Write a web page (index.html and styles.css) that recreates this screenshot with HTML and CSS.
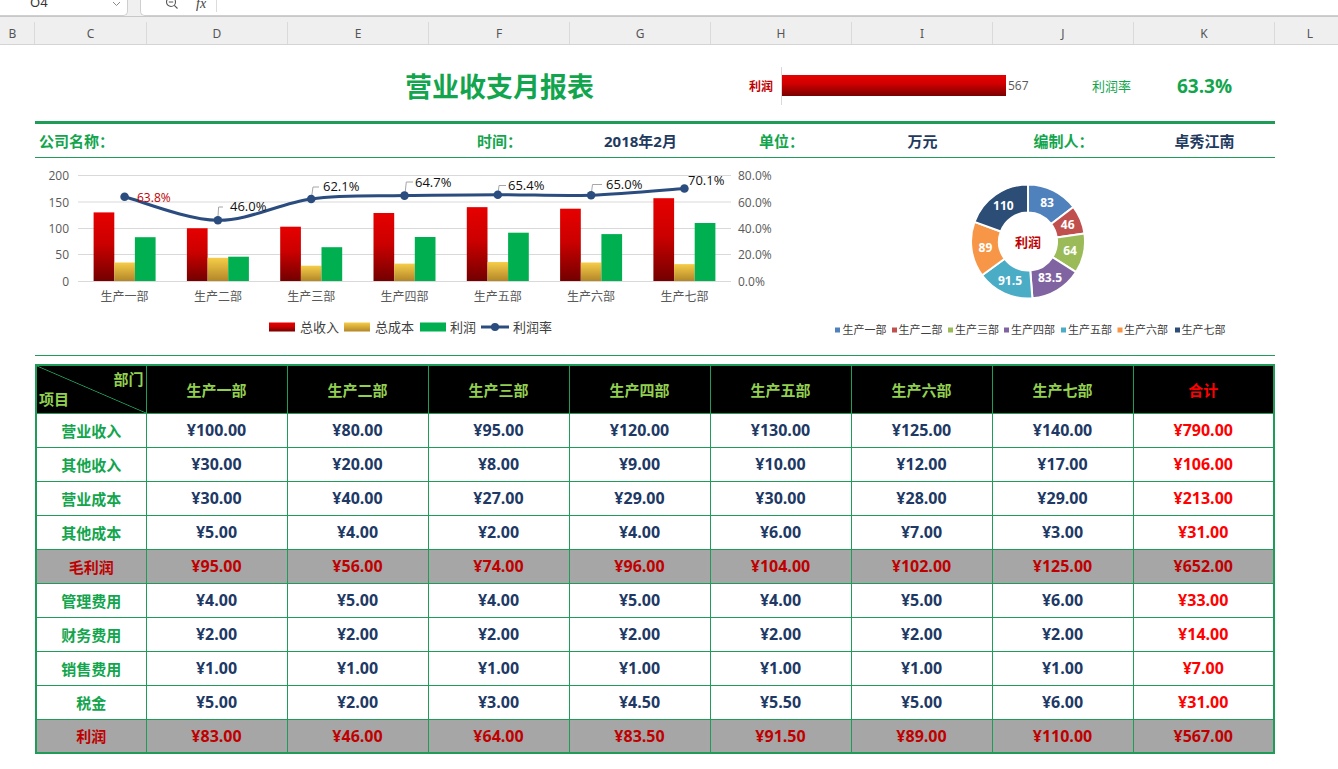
FILE: index.html
```html
<!DOCTYPE html>
<html lang="zh-CN">
<head>
<meta charset="utf-8">
<title>营业收支月报表</title>
<link rel="stylesheet" href="styles.css">
</head>
<body>
<div class="fbar">
  <div class="namebox"><span class="nb-text">O4</span>
    <svg class="chev" width="9" height="6" viewBox="0 0 9 6"><path d="M1 1 L4.5 4.5 L8 1" fill="none" stroke="#8a8a8a" stroke-width="1"/></svg>
  </div>
  <div class="fbox">
    <svg class="zoom" width="14" height="12" viewBox="0 0 14 12"><circle cx="6" cy="2" r="4.5" fill="none" stroke="#555" stroke-width="1.1"/><path d="M3.8 2 H8.2 M9.3 5.3 L12.5 8.5" stroke="#555" stroke-width="1.1" fill="none"/></svg>
    <span class="fx">fx</span>
    <span class="fsep"></span>
  </div>
</div>
<div class="colhdr">
  <div class="ch-b">B</div><div>C</div><div>D</div><div>E</div><div>F</div><div>G</div><div>H</div><div>I</div><div>J</div><div>K</div><div class="ch-l">L</div>
</div>
<div class="sheet">
  <div class="report">
    <div class="title-row">
      <div></div>
      <div class="title">营业收支月报表</div>
      <div class="dbar">
        <span class="dbar-label">利润</span>
        <div class="dbar-plot"><div class="dbar-fill"></div><span class="dbar-val">567</span></div>
      </div>
      <div class="rate-label">利润率</div>
      <div class="rate-val">63.3%</div>
    </div>
    <div class="rule-thick"></div>
    <div class="info-row">
      <div class="info-lbl info-first">公司名称：</div>
      <div></div><div></div>
      <div class="info-lbl">时间：</div>
      <div class="info-val">2018年2月</div>
      <div class="info-lbl">单位：</div>
      <div class="info-val">万元</div>
      <div class="info-lbl">编制人：</div>
      <div class="info-val">卓秀江南</div>
    </div>
    <div class="rule-thin"></div>
    <div class="charts">
      <svg class="combo" width="745" height="197" viewBox="35 158 745 197">
        <defs>
          <linearGradient id="gRed" x1="0" y1="0" x2="0" y2="1"><stop offset="0" stop-color="#e60000"/><stop offset="0.45" stop-color="#cc0000"/><stop offset="1" stop-color="#730000"/></linearGradient>
          <linearGradient id="gYel" x1="0" y1="0" x2="0" y2="1"><stop offset="0" stop-color="#f6cd48"/><stop offset="1" stop-color="#b38628"/></linearGradient>
        </defs>
        <g class="grid-lines">
          <line x1="78" y1="175.5" x2="731" y2="175.5"/>
          <line x1="78" y1="202" x2="731" y2="202"/>
          <line x1="78" y1="228.5" x2="731" y2="228.5"/>
          <line x1="78" y1="254.5" x2="731" y2="254.5"/>
          <line x1="78" y1="281.5" x2="731" y2="281.5"/>
        </g>
        <g class="ax ax-l">
          <text x="69" y="180">200</text><text x="69" y="206.5">150</text><text x="69" y="233">100</text><text x="69" y="259">50</text><text x="69" y="286">0</text>
        </g>
        <g class="ax">
          <text x="738" y="180">80.0%</text><text x="738" y="206.5">60.0%</text><text x="738" y="233">40.0%</text><text x="738" y="259">20.0%</text><text x="738" y="286">0.0%</text>
        </g>
        <g fill="url(#gRed)">
          <rect x="93.6" y="212.4" width="20.7" height="68.6"/>
          <rect x="186.9" y="228.25" width="20.7" height="52.75"/>
          <rect x="280.2" y="226.7" width="20.7" height="54.3"/>
          <rect x="373.5" y="213" width="20.7" height="68"/>
          <rect x="466.8" y="207.15" width="20.7" height="73.85"/>
          <rect x="560.1" y="208.7" width="20.7" height="72.3"/>
          <rect x="653.4" y="198.2" width="20.7" height="82.8"/>
        </g>
        <g fill="url(#gYel)">
          <rect x="114.3" y="262.5" width="20.6" height="18.5"/>
          <rect x="207.6" y="257.8" width="20.6" height="23.2"/>
          <rect x="300.9" y="265.7" width="20.6" height="15.3"/>
          <rect x="394.2" y="263.6" width="20.6" height="17.4"/>
          <rect x="487.5" y="262" width="20.6" height="19"/>
          <rect x="580.8" y="262.5" width="20.6" height="18.5"/>
          <rect x="674.1" y="264.1" width="20.6" height="16.9"/>
        </g>
        <g fill="#00b050">
          <rect x="134.9" y="237.2" width="20.7" height="43.8"/>
          <rect x="228.2" y="256.7" width="20.7" height="24.3"/>
          <rect x="321.5" y="247.2" width="20.7" height="33.8"/>
          <rect x="414.8" y="237" width="20.7" height="44"/>
          <rect x="508.1" y="232.7" width="20.7" height="48.3"/>
          <rect x="601.4" y="234.1" width="20.7" height="46.9"/>
          <rect x="694.7" y="223" width="20.7" height="58"/>
        </g>
        <path class="rate-line" d="M124.6,196.8 C140.15,200.7 186.8,219.9 217.9,220.3 C249,220.7 280.1,203.1 311.2,199 C342.3,194.9 373.4,196.3 404.5,195.6 C435.6,194.9 466.7,194.8 497.8,194.7 C528.9,194.6 560,196.2 591.1,195.2 C622.2,194.2 668.85,189.6 684.4,188.5"/>
        <g class="leaders">
          <polyline points="218,216.5 218.6,207 223,207"/>
          <polyline points="311.8,195.5 313,187 319,187"/>
          <polyline points="405.2,192 406.3,182 413,182"/>
          <polyline points="498.3,191.5 499,185.5 506,185.5"/>
          <polyline points="591.6,191.5 592.5,184.5 602,184.5"/>
        </g>
        <g fill="#2b4c7e">
          <circle cx="124.6" cy="196.8" r="4.3"/><circle cx="217.9" cy="220.3" r="4.3"/><circle cx="311.2" cy="199" r="4.3"/><circle cx="404.5" cy="195.6" r="4.3"/><circle cx="497.8" cy="194.7" r="4.3"/><circle cx="591.1" cy="195.2" r="4.3"/><circle cx="684.4" cy="188.5" r="4.3"/>
        </g>
        <text class="dl dl-red" x="137" y="201.5">63.8%</text>
        <text class="dl" x="230" y="210.5">46.0%</text>
        <text class="dl" x="323" y="190.5">62.1%</text>
        <text class="dl" x="415" y="186.5">64.7%</text>
        <text class="dl" x="508" y="189.5">65.4%</text>
        <text class="dl" x="606" y="188.5">65.0%</text>
        <text class="dl" x="688" y="185">70.1%</text>
        <g class="cat">
          <text x="124.6" y="300.5">生产一部</text><text x="217.9" y="300.5">生产二部</text><text x="311.2" y="300.5">生产三部</text><text x="404.5" y="300.5">生产四部</text><text x="497.8" y="300.5">生产五部</text><text x="591.1" y="300.5">生产六部</text><text x="684.4" y="300.5">生产七部</text>
        </g>
        <g class="lg">
          <rect x="269" y="322.5" width="26" height="9" fill="url(#gRed)"/><text x="300" y="331.5">总收入</text>
          <rect x="344" y="322.5" width="26" height="9" fill="url(#gYel)"/><text x="375" y="331.5">总成本</text>
          <rect x="420" y="322.5" width="26" height="9" fill="#00b050"/><text x="450" y="331.5">利润</text>
          <line x1="481" y1="327" x2="509" y2="327" stroke="#2b4c7e" stroke-width="3"/><circle cx="495" cy="327" r="4" fill="#2b4c7e"/><text x="513" y="331.5">利润率</text>
        </g>
      </svg>
      <svg class="donut" width="495" height="197" viewBox="780 158 495 197">
        <g stroke="#fff" stroke-width="2" stroke-linejoin="round">
          <path fill="#4f81bd" d="M1028,184.5 A57,57 0 0 1 1073.34,206.96 L1051.07,223.93 A29,29 0 0 0 1028,212.5 Z"/>
          <path fill="#c0504d" d="M1073.34,206.96 A57,57 0 0 1 1084.43,233.47 L1056.71,237.41 A29,29 0 0 0 1051.07,223.93 Z"/>
          <path fill="#9bbb59" d="M1084.43,233.47 A57,57 0 0 1 1076.05,272.16 L1052.45,257.1 A29,29 0 0 0 1056.71,237.41 Z"/>
          <path fill="#8064a2" d="M1076.05,272.16 A57,57 0 0 1 1032.41,298.33 L1030.24,270.41 A29,29 0 0 0 1052.45,257.1 Z"/>
          <path fill="#4bacc6" d="M1032.41,298.33 A57,57 0 0 1 982.1,275.29 L1004.65,258.69 A29,29 0 0 0 1030.24,270.41 Z"/>
          <path fill="#f79646" d="M982.1,275.29 A57,57 0 0 1 974.49,221.86 L1000.78,231.51 A29,29 0 0 0 1004.65,258.69 Z"/>
          <path fill="#2c4d75" d="M974.49,221.86 A57,57 0 0 1 1028,184.5 L1028,212.5 A29,29 0 0 0 1000.78,231.51 Z"/>
        </g>
        <g class="dn">
          <text x="1047" y="207">83</text>
          <text x="1067.7" y="229">46</text>
          <text x="1070" y="254.6">64</text>
          <text x="1050" y="282.4">83.5</text>
          <text x="1010" y="284.6">91.5</text>
          <text x="985.4" y="251.5">89</text>
          <text x="1003.4" y="210.2">110</text>
        </g>
        <text class="dn-center" x="1028" y="246.5">利润</text>
        <g class="dlg">
          <rect x="835" y="327.5" width="5" height="5" fill="#4f81bd"/><text x="842.5" y="334">生产一部</text>
          <rect x="892" y="327.5" width="5" height="5" fill="#c0504d"/><text x="898.5" y="334">生产二部</text>
          <rect x="948" y="327.5" width="5" height="5" fill="#9bbb59"/><text x="955" y="334">生产三部</text>
          <rect x="1004" y="327.5" width="5" height="5" fill="#8064a2"/><text x="1011" y="334">生产四部</text>
          <rect x="1061" y="327.5" width="5" height="5" fill="#4bacc6"/><text x="1068" y="334">生产五部</text>
          <rect x="1117.5" y="327.5" width="5" height="5" fill="#f79646"/><text x="1124" y="334">生产六部</text>
          <rect x="1175" y="327.5" width="5" height="5" fill="#2c4d75"/><text x="1181.5" y="334">生产七部</text>
        </g>
      </svg>
    </div>
    <div class="rule-thin"></div>
    <table class="tbl">
      <colgroup><col class="c-first"><col><col><col><col><col><col><col><col></colgroup>
      <thead>
        <tr>
          <th class="diag"><div class="dg-top">部门</div><div class="dg-bot">项目</div></th>
          <th>生产一部</th><th>生产二部</th><th>生产三部</th><th>生产四部</th><th>生产五部</th><th>生产六部</th><th>生产七部</th><th class="total">合计</th>
        </tr>
      </thead>
      <tbody>
        <tr><td class="lbl">营业收入</td><td>¥100.00</td><td>¥80.00</td><td>¥95.00</td><td>¥120.00</td><td>¥130.00</td><td>¥125.00</td><td>¥140.00</td><td class="sum">¥790.00</td></tr>
        <tr><td class="lbl">其他收入</td><td>¥30.00</td><td>¥20.00</td><td>¥8.00</td><td>¥9.00</td><td>¥10.00</td><td>¥12.00</td><td>¥17.00</td><td class="sum">¥106.00</td></tr>
        <tr><td class="lbl">营业成本</td><td>¥30.00</td><td>¥40.00</td><td>¥27.00</td><td>¥29.00</td><td>¥30.00</td><td>¥28.00</td><td>¥29.00</td><td class="sum">¥213.00</td></tr>
        <tr><td class="lbl">其他成本</td><td>¥5.00</td><td>¥4.00</td><td>¥2.00</td><td>¥4.00</td><td>¥6.00</td><td>¥7.00</td><td>¥3.00</td><td class="sum">¥31.00</td></tr>
        <tr class="gray"><td class="lbl">毛利润</td><td>¥95.00</td><td>¥56.00</td><td>¥74.00</td><td>¥96.00</td><td>¥104.00</td><td>¥102.00</td><td>¥125.00</td><td class="sum">¥652.00</td></tr>
        <tr><td class="lbl">管理费用</td><td>¥4.00</td><td>¥5.00</td><td>¥4.00</td><td>¥5.00</td><td>¥4.00</td><td>¥5.00</td><td>¥6.00</td><td class="sum">¥33.00</td></tr>
        <tr><td class="lbl">财务费用</td><td>¥2.00</td><td>¥2.00</td><td>¥2.00</td><td>¥2.00</td><td>¥2.00</td><td>¥2.00</td><td>¥2.00</td><td class="sum">¥14.00</td></tr>
        <tr><td class="lbl">销售费用</td><td>¥1.00</td><td>¥1.00</td><td>¥1.00</td><td>¥1.00</td><td>¥1.00</td><td>¥1.00</td><td>¥1.00</td><td class="sum">¥7.00</td></tr>
        <tr><td class="lbl">税金</td><td>¥5.00</td><td>¥2.00</td><td>¥3.00</td><td>¥4.50</td><td>¥5.50</td><td>¥5.00</td><td>¥6.00</td><td class="sum">¥31.00</td></tr>
        <tr class="gray"><td class="lbl">利润</td><td>¥83.00</td><td>¥46.00</td><td>¥64.00</td><td>¥83.50</td><td>¥91.50</td><td>¥89.00</td><td>¥110.00</td><td class="sum">¥567.00</td></tr>
      </tbody>
    </table>
  </div>
</div>
</body>
</html>
```

FILE: styles.css
```css
* { box-sizing: border-box; margin: 0; padding: 0; }
html, body { background: #fff; }
body {
  width: 1338px;
  height: 769px;
  overflow: hidden;
  font-family: "Noto Sans", "Noto Sans CJK SC", sans-serif;
}

/* formula bar */
.fbar {
  display: flex;
  height: 17px;
  background: #f0f0f0;
  border-bottom: 1px solid #c8c8c8;
  overflow: hidden;
}
.namebox {
  width: 128px;
  height: 16px;
  background: #fff;
  border-right: 1px solid #cfcfcf;
  border-bottom: 1px solid #cfcfcf;
  border-bottom-right-radius: 5px;
  display: flex;
  align-items: flex-start;
  padding-left: 30px;
}
.nb-text {
  font-size: 13px;
  line-height: 13px;
  color: #333;
  margin-top: -4px;
}
.chev { margin-left: auto; margin-right: 6px; margin-top: 1px; }
.fbox {
  flex: 1;
  margin-left: 12px;
  height: 16px;
  background: #fff;
  border-left: 1px solid #cfcfcf;
  border-bottom: 1px solid #cfcfcf;
  border-bottom-left-radius: 5px;
  display: flex;
  align-items: flex-start;
  padding-left: 24px;
}
.fx {
  margin-left: 17px;
  font-family: "Liberation Serif", serif;
  font-style: italic;
  font-size: 14px;
  line-height: 14px;
  margin-top: -3px;
  color: #444;
}
.fsep {
  width: 1px;
  height: 12px;
  background: #dcdcdc;
  margin-left: 10px;
}

/* column header */
.colhdr {
  display: grid;
  grid-template-columns: 35px 112px repeat(8, 141px) 1fr;
  height: 28px;
  padding-top: 5px;
  background: #efefef;
  border-bottom: 1px solid #d4d4d4;
}
.colhdr div {
  border-right: 1px solid #dadada;
  font-size: 12px;
  line-height: 16px;
  padding-top: 4px;
  color: #555;
  text-align: center;
}
.colhdr .ch-b { padding-right: 9px; }
.colhdr .ch-l { border-right: none; padding-left: 7px; }

/* sheet */
.sheet { padding-left: 35px; }
.report { width: 1240px; }

.title-row {
  display: grid;
  grid-template-columns: 253px 423px 282px 141px 141px;
  height: 76px;
  padding-top: 5px;
  align-items: center;
}
.title {
  text-align: center;
  font-family: "Noto Sans CJK SC", sans-serif;
  font-weight: 700;
  font-size: 27px;
  color: #12a54d;
  white-space: nowrap;
}
.dbar { display: flex; align-items: center; }
.dbar-label {
  flex-shrink: 0;
  width: 62px;
  text-align: right;
  font-family: "Noto Sans CJK SC", sans-serif;
  font-size: 12px;
  font-weight: 700;
  color: #c00000;
}
.dbar-plot {
  flex-shrink: 0;
  margin-left: 8px;
  border-left: 1px solid #d9d9d9;
  height: 38px;
  display: flex;
  align-items: center;
}
.dbar-fill {
  width: 224px;
  height: 21px;
  background: linear-gradient(#e50000, #d20000 40%, #7a0000);
}
.dbar-val {
  margin-left: 2px;
  font-family: "Open Sans", sans-serif;
  font-size: 12px;
  color: #595959;
}
.rate-label {
  text-align: right;
  padding-right: 3px;
  font-family: "Noto Sans CJK SC", sans-serif;
  font-size: 13px;
  color: #12a54d;
}
.rate-val {
  text-align: center;
  font-family: "Open Sans", sans-serif;
  font-weight: 700;
  font-size: 19px;
  color: #12a54d;
}

.rule-thick { height: 3px; background: #1f9d58; }
.rule-thin { height: 1px; background: #1f9d58; }

.info-row {
  display: grid;
  grid-template-columns: 112px repeat(8, 141px);
  height: 33px;
  align-items: center;
  font-family: "Open Sans", "Noto Sans CJK SC", sans-serif;
  font-size: 15px;
  font-weight: 700;
}
.info-lbl { color: #12a54d; text-align: center; }
.info-first { text-align: left; padding-left: 4px; white-space: nowrap; }
.info-val { color: #1f3a60; text-align: center; }

/* charts */
.charts { display: flex; height: 197px; }
.charts svg { display: block; }
.grid-lines line { stroke: #d9d9d9; stroke-width: 1; }
.ax text { font-family: "Open Sans", sans-serif; font-size: 12px; fill: #595959; }
.ax-l text { text-anchor: end; }
.rate-line { fill: none; stroke: #2b4c7e; stroke-width: 3; }
.leaders polyline { fill: none; stroke: #a6a6a6; stroke-width: 1; }
.dl { font-family: "Open Sans", sans-serif; font-size: 13px; fill: #111; }
.dl-red { fill: #c00000; font-size: 12px; }
.cat text { font-family: "Noto Sans CJK SC", sans-serif; font-size: 12px; fill: #595959; text-anchor: middle; }
.lg text { font-family: "Noto Sans CJK SC", sans-serif; font-size: 13px; fill: #404040; }
.dn text { font-family: "Open Sans", sans-serif; font-weight: 700; font-size: 12px; fill: #fff; text-anchor: middle; }
.dn-center { font-family: "Noto Sans CJK SC", sans-serif; font-weight: 700; font-size: 13px; fill: #c00000; text-anchor: middle; }
.dlg text { font-family: "Noto Sans CJK SC", sans-serif; font-size: 11px; fill: #404040; }

/* table */
.tbl {
  margin-top: 8px;
  width: 1238px;
  table-layout: fixed;
  border-collapse: collapse;
  border: 2px solid #1f9d58;
}
.tbl col { width: 141px; }
.tbl col.c-first { width: 110px; }
.tbl th, .tbl td {
  border: 1px solid #1f9d58;
  text-align: center;
  padding: 0;
  font-family: "Open Sans", "Noto Sans CJK SC", sans-serif;
  font-weight: 700;
  font-size: 16px;
  color: #203864;
  white-space: nowrap;
}
.tbl thead th {
  height: 48px;
  font-size: 15px;
  background: #000;
  color: #92d050;
}
.tbl thead th.total { color: #ff0000; }
.tbl th.diag {
  background: linear-gradient(to top right, #000 calc(50% - 0.8px), #1f9d58 50%, #000 calc(50% + 0.8px));
  line-height: 20px;
}
.dg-top { text-align: right; padding-right: 2px; }
.dg-bot { text-align: left; padding-left: 2px; }
.tbl tbody td { height: 34px; }
.tbl td.lbl { color: #12a54d; font-size: 15px; }
.tbl td.sum { color: #ff0000; }
.tbl tr.gray td { background: #a6a6a6; color: #c00000; }
```
